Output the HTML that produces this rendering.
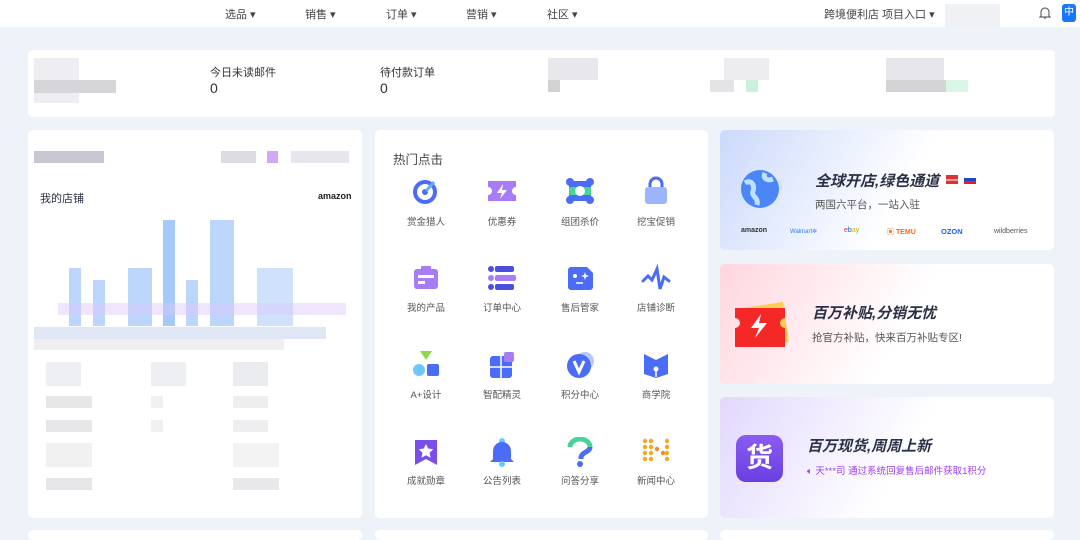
<!DOCTYPE html>
<html><head><meta charset="utf-8"><style>
*{margin:0;padding:0;box-sizing:border-box}
body{width:1080px;height:535px;overflow:hidden;background:#eef2f9;font-family:"Liberation Sans","Noto Sans CJK SC",sans-serif;color:#333;position:relative}
.abs{position:absolute}
.nav{left:0;top:0;width:1080px;height:27px;background:#fff}
.nav span{position:absolute;top:6px;font-size:11px;color:#444}
.card{position:absolute;background:#fff;border-radius:5px}
.blur{position:absolute;background:#e6e7ec}
.ic{position:absolute;width:30px;height:30px}
.lb{position:absolute;font-size:9.5px;color:#555;width:70px;text-align:center}
.bar{position:absolute;background:#bcd6fb}
.t{font-weight:bold;font-style:italic;color:#2a3045;font-size:15px;position:absolute}
.s{font-size:10.5px;color:#555;position:absolute}
</style></head><body>
<div class="abs nav">
<span style="left:225px">选品 ▾</span><span style="left:305px">销售 ▾</span><span style="left:386px">订单 ▾</span><span style="left:466px">营销 ▾</span><span style="left:547px">社区 ▾</span>
<span style="left:824px">跨境便利店 项目入口 ▾</span>
<div class="blur" style="left:945px;top:4px;width:55px;height:24px;background:#f0f1f4"></div>
<svg class="abs" style="left:1039px;top:6px" width="12" height="14" viewBox="0 0 12 14"><path d="M2 10V6a4 4 0 0 1 8 0v4l1 1H1zM5 12h2" fill="none" stroke="#666" stroke-width="1.2"/></svg>
<div class="abs" style="left:1062px;top:4px;width:14px;height:18px;background:#1677ff;border-radius:3px;color:#fff;font-size:10px;text-align:center;line-height:18px">中</div>
</div>

<div class="card" style="left:28px;top:50px;width:1027px;height:67px"></div>
<div class="blur" style="left:34px;top:58px;width:45px;height:45px;background:#eeeef2"></div>
<div class="blur" style="left:34px;top:80px;width:82px;height:13px;background:#d6d6da"></div>
<div class="abs" style="left:210px;top:64px;font-size:11px">今日未读邮件</div>
<div class="abs" style="left:210px;top:80px;font-size:14px">0</div>
<div class="abs" style="left:380px;top:64px;font-size:11px">待付款订单</div>
<div class="abs" style="left:380px;top:80px;font-size:14px">0</div>
<div class="blur" style="left:548px;top:58px;width:50px;height:22px;background:#e8e8ec"></div>
<div class="blur" style="left:548px;top:80px;width:12px;height:12px;background:#d2d2d4"></div>
<div class="blur" style="left:724px;top:58px;width:45px;height:22px;background:#ededf0"></div>
<div class="blur" style="left:710px;top:80px;width:24px;height:12px;background:#e4e4e6"></div>
<div class="blur" style="left:746px;top:80px;width:12px;height:12px;background:#c9f2d8"></div>
<div class="blur" style="left:886px;top:58px;width:58px;height:22px;background:#e6e6ea"></div>
<div class="blur" style="left:886px;top:80px;width:60px;height:12px;background:#d4d4d6"></div>
<div class="blur" style="left:946px;top:80px;width:22px;height:12px;background:#d8f6e4"></div>

<div class="card" style="left:28px;top:130px;width:334px;height:388px"></div>
<div class="blur" style="left:34px;top:151px;width:70px;height:12px;background:#c6c7d0"></div>
<div class="blur" style="left:221px;top:151px;width:35px;height:12px;background:#dcdde2"></div>
<div class="blur" style="left:267px;top:151px;width:11px;height:12px;background:#cfa9f3"></div>
<div class="blur" style="left:291px;top:151px;width:58px;height:12px;background:#e6e7ec"></div>
<div class="abs" style="left:40px;top:190px;font-size:11px;color:#2a3045">我的店铺</div>
<div class="abs" style="left:318px;top:191px;font-size:9px;font-weight:bold;color:#222">amazon</div>
<div class="bar" style="left:69px;top:268px;width:12px;height:58px"></div>
<div class="bar" style="left:93px;top:280px;width:12px;height:46px"></div>
<div class="bar" style="left:128px;top:268px;width:24px;height:58px"></div>
<div class="bar" style="left:163px;top:220px;width:12px;height:106px;background:#a5c9f8"></div>
<div class="bar" style="left:186px;top:280px;width:12px;height:46px"></div>
<div class="bar" style="left:210px;top:220px;width:24px;height:106px"></div>
<div class="bar" style="left:257px;top:268px;width:36px;height:58px;background:#d0e2fb"></div>
<div class="abs" style="left:58px;top:303px;width:288px;height:12px;background:rgba(220,200,250,.45)"></div>
<div class="blur" style="left:34px;top:327px;width:292px;height:12px;background:#dfe7f4"></div>
<div class="blur" style="left:34px;top:339px;width:250px;height:11px;background:#efeff1"></div>
<div class="blur" style="left:46px;top:362px;width:35px;height:24px;background:#eeeff2"></div>
<div class="blur" style="left:151px;top:362px;width:35px;height:24px;background:#eeeff2"></div>
<div class="blur" style="left:233px;top:362px;width:35px;height:24px;background:#eaebee"></div>
<div class="blur" style="left:46px;top:396px;width:46px;height:12px;background:#e6e6e8"></div>
<div class="blur" style="left:46px;top:420px;width:46px;height:12px;background:#e6e6e8"></div>
<div class="blur" style="left:46px;top:443px;width:46px;height:24px;background:#f1f1f2"></div>
<div class="blur" style="left:46px;top:478px;width:46px;height:12px;background:#e6e6e8"></div>
<div class="blur" style="left:151px;top:396px;width:12px;height:12px;background:#f0f0f1"></div>
<div class="blur" style="left:151px;top:420px;width:12px;height:12px;background:#f0f0f1"></div>
<div class="blur" style="left:233px;top:396px;width:35px;height:12px;background:#eeeef0"></div>
<div class="blur" style="left:233px;top:420px;width:35px;height:12px;background:#eeeef0"></div>
<div class="blur" style="left:233px;top:443px;width:46px;height:24px;background:#f3f3f4"></div>
<div class="blur" style="left:233px;top:478px;width:46px;height:12px;background:#e8e8ea"></div>

<div class="card" style="left:375px;top:130px;width:333px;height:388px"></div>
<div class="abs" style="left:393px;top:149px;font-size:12.5px;color:#444">热门点击</div>
<!-- row1 -->
<svg class="ic" style="left:411px;top:176px" viewBox="0 0 30 30"><circle cx="14" cy="16" r="10" fill="none" stroke="#4a6cf7" stroke-width="4"/><circle cx="14" cy="16" r="3" fill="#4a6cf7"/><path d="M15 15l8-9" stroke="#6aa8ff" stroke-width="3"/></svg>
<svg class="ic" style="left:487px;top:176px" viewBox="0 0 30 30"><path d="M1 5h28v6a4 4 0 0 0 0 8v6H1v-6a4 4 0 0 0 0-8z" fill="#a77cf5"/><path d="M16 8l-6 9h5l-2 6 7-9h-5z" fill="#fff"/></svg>
<svg class="ic" style="left:565px;top:176px" viewBox="0 0 30 30"><rect x="4" y="5" width="22" height="20" rx="3" fill="#4a6cf7"/><rect x="4" y="11" width="22" height="8" fill="#49d39b"/><circle cx="5" cy="6" r="4" fill="#4a6cf7"/><circle cx="25" cy="6" r="4" fill="#4a6cf7"/><circle cx="5" cy="24" r="4" fill="#4a6cf7"/><circle cx="25" cy="24" r="4" fill="#4a6cf7"/><circle cx="15" cy="15" r="5" fill="#fff"/></svg>
<svg class="ic" style="left:641px;top:176px" viewBox="0 0 30 30"><path d="M9 12V8a6 6 0 0 1 12 0v4" fill="none" stroke="#4a6cf7" stroke-width="3"/><rect x="4" y="11" width="22" height="17" rx="3" fill="#9bb4fb"/></svg>
<!-- row2 -->
<svg class="ic" style="left:411px;top:263px" viewBox="0 0 30 30"><rect x="3" y="6" width="24" height="20" rx="3" fill="#a77cf5"/><rect x="10" y="3" width="10" height="4" rx="1" fill="#a77cf5"/><rect x="7" y="12" width="16" height="3" fill="#fff"/><rect x="7" y="18" width="7" height="3" fill="#fff"/></svg>
<svg class="ic" style="left:487px;top:263px" viewBox="0 0 30 30"><circle cx="4" cy="6" r="3" fill="#4a4fe0"/><circle cx="4" cy="15" r="3" fill="#a77cf5"/><circle cx="4" cy="24" r="3" fill="#4a4fe0"/><rect x="8" y="3" width="19" height="6" rx="2" fill="#4a4fe0"/><rect x="8" y="12" width="21" height="6" rx="2" fill="#a77cf5"/><rect x="8" y="21" width="19" height="6" rx="2" fill="#4a4fe0"/></svg>
<svg class="ic" style="left:565px;top:263px" viewBox="0 0 30 30"><path d="M3 7a3 3 0 0 1 3-3h16l6 6v14a3 3 0 0 1-3 3H6a3 3 0 0 1-3-3z" fill="#4a6cf7"/><circle cx="10" cy="13" r="2" fill="#fff"/><path d="M20 9l1 3 3 1-3 1-1 3-1-3-3-1 3-1z" fill="#fff"/><path d="M11 20h7" stroke="#fff" stroke-width="1.5"/></svg>
<svg class="ic" style="left:641px;top:263px" viewBox="0 0 30 30"><path d="M2 18l5-5 4 4 5-11 3 20 4-12 5 4" fill="none" stroke="#4a6cf7" stroke-width="3" stroke-linecap="round"/></svg>
<!-- row3 -->
<svg class="ic" style="left:411px;top:350px" viewBox="0 0 30 30"><path d="M9 1h12l-6 9z" fill="#8fd84c"/><circle cx="8" cy="20" r="6" fill="#6cc7ff"/><rect x="16" y="14" width="12" height="12" rx="2" fill="#4a6cf7"/></svg>
<svg class="ic" style="left:487px;top:350px" viewBox="0 0 30 30"><rect x="3" y="6" width="22" height="22" rx="3" fill="#4a6cf7"/><path d="M3 17h22M14 6v22" stroke="#fff" stroke-width="1.5"/><rect x="17" y="2" width="10" height="10" rx="2" fill="#a77cf5"/></svg>
<svg class="ic" style="left:565px;top:350px" viewBox="0 0 30 30"><circle cx="20" cy="11" r="9" fill="#b9c8fb"/><circle cx="14" cy="16" r="12" fill="#4a6cf7"/><path d="M9 11l5 11 5-11" fill="none" stroke="#fff" stroke-width="3"/></svg>
<svg class="ic" style="left:641px;top:350px" viewBox="0 0 30 30"><path d="M3 4l12 6 12-6v20l-12 4-12-4z" fill="#4a6cf7"/><circle cx="15" cy="19" r="2.5" fill="#fff"/><path d="M15 21v6" stroke="#fff" stroke-width="1.5"/></svg>
<!-- row4 -->
<svg class="ic" style="left:411px;top:437px" viewBox="0 0 30 30"><path d="M4 3h22v25l-11-6-11 6z" fill="#7a4ee8"/><path d="M15 7l2.2 4.5 5 .7-3.6 3.5.9 5-4.5-2.4-4.5 2.4.9-5-3.6-3.5 5-.7z" fill="#fff"/></svg>
<svg class="ic" style="left:487px;top:437px" viewBox="0 0 30 30"><circle cx="15" cy="4" r="3" fill="#6cc7ff"/><path d="M6 22V14a9 9 0 0 1 18 0v8l3 3H3z" fill="#4a6cf7"/><circle cx="15" cy="27" r="3" fill="#6cc7ff"/></svg>
<svg class="ic" style="left:565px;top:437px" viewBox="0 0 30 30"><path d="M5 10a10 8 0 0 1 20 0" fill="none" stroke="#49d39b" stroke-width="5"/><path d="M25 10c0 5-8 5-9 10v2" fill="none" stroke="#4a6cf7" stroke-width="5"/><circle cx="15" cy="27" r="3" fill="#4a6cf7"/></svg>
<svg class="ic" style="left:641px;top:437px" viewBox="0 0 30 30"><g fill="#f5a623"><circle cx="4" cy="4" r="2.2"/><circle cx="4" cy="10" r="2.2"/><circle cx="4" cy="16" r="2.2"/><circle cx="4" cy="22" r="2.2"/><circle cx="10" cy="4" r="2.2"/><circle cx="10" cy="10" r="2.2"/><circle cx="10" cy="16" r="2.2"/><circle cx="10" cy="22" r="2.2"/><circle cx="16" cy="12" r="2.2" fill="#f58a23"/><circle cx="22" cy="16" r="2.2" fill="#f58a23"/><circle cx="26" cy="4" r="2.2"/><circle cx="26" cy="10" r="2.2"/><circle cx="26" cy="16" r="2.2"/><circle cx="26" cy="22" r="2.2"/></g></svg>
<div class="lb" style="left:391px;top:214px">赏金猎人</div><div class="lb" style="left:467px;top:214px">优惠券</div><div class="lb" style="left:545px;top:214px">组团杀价</div><div class="lb" style="left:621px;top:214px">挖宝促销</div>
<div class="lb" style="left:391px;top:300px">我的产品</div><div class="lb" style="left:467px;top:300px">订单中心</div><div class="lb" style="left:545px;top:300px">售后管家</div><div class="lb" style="left:621px;top:300px">店铺诊断</div>
<div class="lb" style="left:391px;top:387px">A+设计</div><div class="lb" style="left:467px;top:387px">智配精灵</div><div class="lb" style="left:545px;top:387px">积分中心</div><div class="lb" style="left:621px;top:387px">商学院</div>
<div class="lb" style="left:391px;top:473px">成就勋章</div><div class="lb" style="left:467px;top:473px">公告列表</div><div class="lb" style="left:545px;top:473px">问答分享</div><div class="lb" style="left:621px;top:473px">新闻中心</div>

<div class="card" style="left:720px;top:130px;width:334px;height:120px;background:linear-gradient(120deg,#cbd9fb 0%,#fff 55%)"></div>
<svg class="abs" style="left:735px;top:165px" width="50" height="50" viewBox="0 0 50 50"><ellipse cx="25" cy="27" rx="24" ry="10" fill="#cfe3ff" opacity=".7" transform="rotate(-20 25 27)"/><circle cx="25" cy="24" r="19" fill="#4a86f7"/><path d="M10 18c6-4 10 2 8 8s6 6 4 14M30 8c-3 6 3 8 8 6" fill="none" stroke="#bfe0ff" stroke-width="5"/></svg>
<div class="t" style="left:815px;top:170px">全球开店,绿色通道</div>
<div class="abs" style="left:946px;top:175px;width:12px;height:9px;background:linear-gradient(#d33 0 50%,#fff 50% 60%,#d33 60%)"></div>
<div class="abs" style="left:964px;top:175px;width:12px;height:9px;background:linear-gradient(#fff 0 33%,#2543c8 33% 66%,#d22 66%)"></div>
<div class="s" style="left:815px;top:197px">两国六平台，一站入驻</div>
<div class="abs" style="left:741px;top:227px;font-size:7px;font-weight:bold;color:#333">amazon</div>
<div class="abs" style="left:790px;top:228px;font-size:6px;color:#2b7de9">Walmart✲</div>
<div class="abs" style="left:844px;top:227px;font-size:7px;color:#e53238">e<span style="color:#0064d2">b</span><span style="color:#f5af02">a</span><span style="color:#86b817">y</span></div>
<div class="abs" style="left:887px;top:227px;font-size:7px;font-weight:bold;color:#f56a1a">▣ TEMU</div>
<div class="abs" style="left:941px;top:227px;font-size:7.5px;font-weight:bold;color:#1863f2">OZON</div>
<div class="abs" style="left:994px;top:228px;font-size:7px;color:#555">wildberries</div>

<div class="card" style="left:720px;top:264px;width:334px;height:120px;background:linear-gradient(120deg,#ffd6df 0%,#fff 55%)"></div>
<svg class="abs" style="left:733px;top:300px" width="62" height="50" viewBox="0 0 62 50"><path d="M10 8l40-6 6 40-40 4z" fill="#ffcb50"/><path d="M2 8h50v10a4 4 0 0 0 0 10v19H2V28a4 4 0 0 0 0-10z" fill="#f52828"/><path d="M28 14l-10 14h8l-4 10 12-15h-8z" fill="#fff"/></svg>
<div class="t" style="left:812px;top:302px">百万补贴,分销无忧</div>
<div class="s" style="left:812px;top:330px">抢官方补贴，快来百万补贴专区!</div>

<div class="card" style="left:720px;top:397px;width:334px;height:121px;background:linear-gradient(120deg,#e2d8fd 0%,#fff 55%)"></div>
<div class="abs" style="left:736px;top:435px;width:47px;height:47px;border-radius:10px;background:linear-gradient(#8a5cf2,#6a3fe0);color:#fff;font-size:27px;font-weight:bold;text-align:center;line-height:47px">货</div>
<div class="t" style="left:807px;top:435px">百万现货,周周上新</div>
<div class="s" style="left:807px;top:463px;color:#9b3ef0;font-size:9.5px">🔈︎ 天***司 通过系统回复售后邮件获取1积分</div>

<div class="card" style="left:28px;top:530px;width:334px;height:10px"></div>
<div class="card" style="left:375px;top:530px;width:333px;height:10px"></div>
<div class="card" style="left:720px;top:530px;width:334px;height:10px"></div>
</body></html>
